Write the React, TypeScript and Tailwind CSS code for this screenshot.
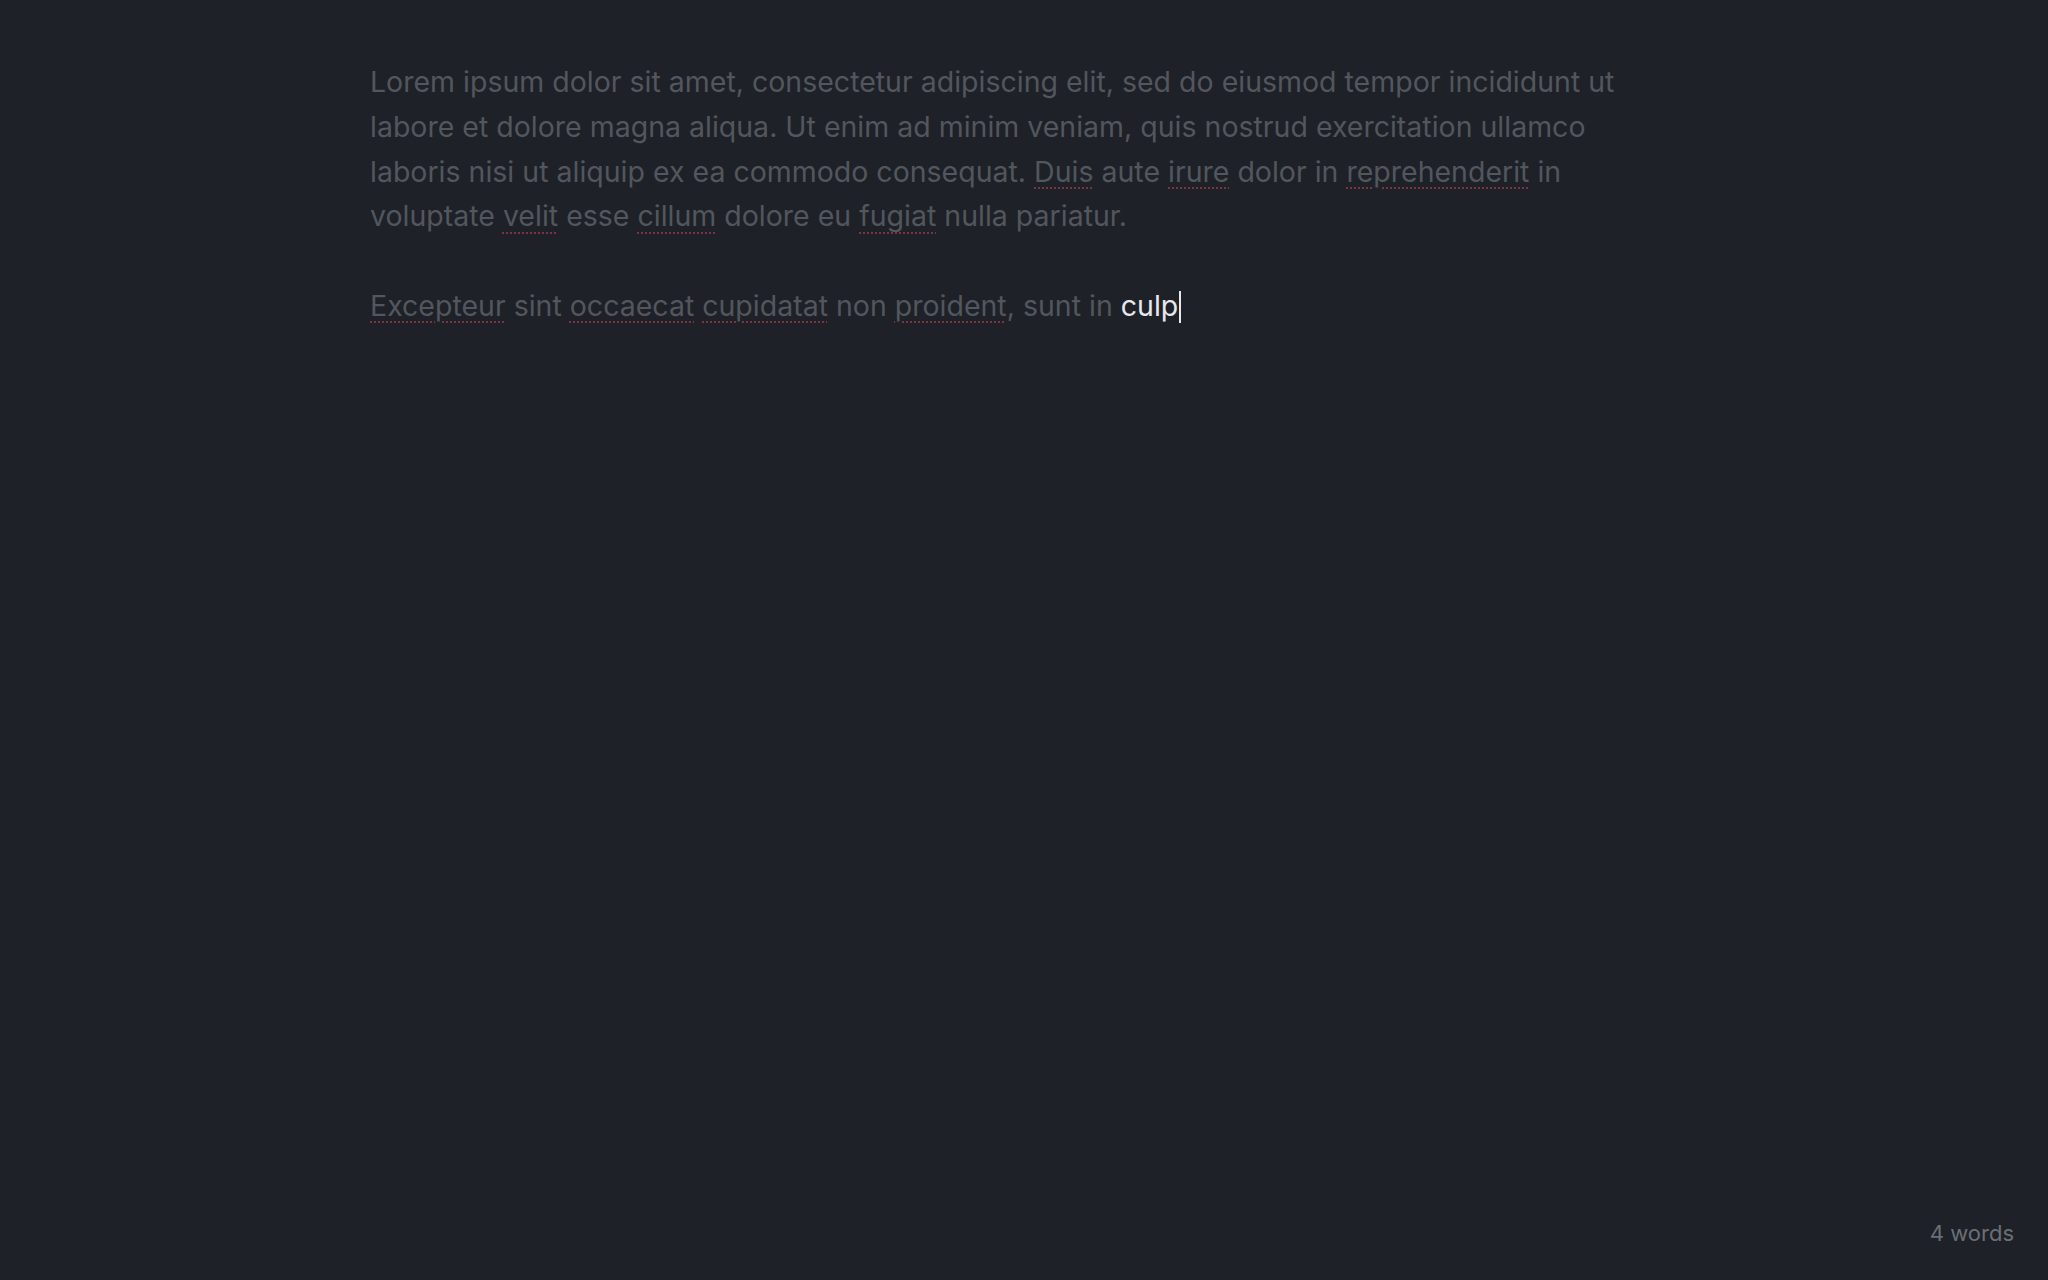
import React from 'react';

const misspelled = 'underline decoration-dotted decoration-[#7e3340] decoration-2 underline-offset-[6px]';

const Word: React.FC<{ children: React.ReactNode }> = ({ children }) => (
  <span className={misspelled}>{children}</span>
);

const App: React.FC = () => {
  return (
    <div
      className="h-screen w-full bg-[#1e2128] flex flex-col overflow-hidden"
      style={{ fontFamily: 'Inter, "Noto Sans", sans-serif' }}
    >
      <main className="flex-1 pt-[60px] pl-[370px]">
        <div className="w-[1340px] text-[28.5px] leading-[44.8px] text-[#52565d]">
          <p>
            Lorem ipsum dolor sit amet, consectetur adipiscing elit, sed do eiusmod tempor incididunt ut
            <br />
            labore et dolore magna aliqua. Ut enim ad minim veniam, quis nostrud exercitation ullamco
            <br />
            laboris nisi ut aliquip ex ea commodo consequat. <Word>Duis</Word> aute <Word>irure</Word> dolor in{' '}
            <Word>reprehenderit</Word> in
            <br />
            voluptate <Word>velit</Word> esse <Word>cillum</Word> dolore eu <Word>fugiat</Word> nulla pariatur.
          </p>
          <p className="mt-[44.8px]">
            <Word>Excepteur</Word> sint <Word>occaecat</Word> <Word>cupidatat</Word> non{' '}
            <Word>proident</Word>, sunt in{' '}
            <span className="text-[#e8e8ea]">culp</span>
            <span className="inline-block w-[2px] h-[32px] bg-[#e8e8ea] align-[-7px] ml-[1px]"></span>
          </p>
        </div>
      </main>
      <footer className="flex justify-end pr-[34px] pb-[30px]">
        <span className="text-[22px] text-[#6b6f76]">4 words</span>
      </footer>
    </div>
  );
};

export default App;
